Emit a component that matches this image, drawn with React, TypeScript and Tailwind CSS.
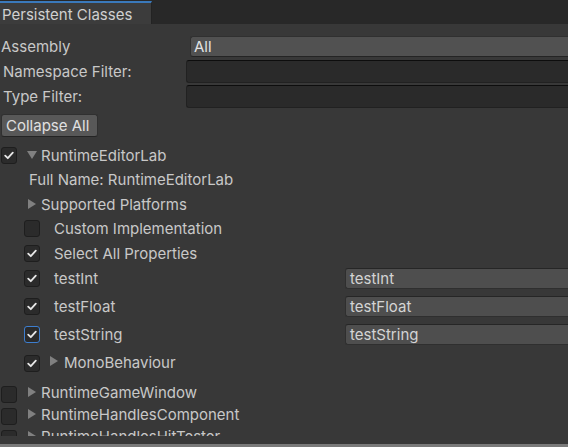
import React from "react";

const font = { fontFamily: "Inter, 'Noto Sans', sans-serif" };

function Check({ checked, focused }: { checked?: boolean; focused?: boolean }) {
  return (
    <div
      className={`w-[16px] h-[17px] shrink-0 rounded-[3px] border bg-[#2b2b2b] flex items-center justify-center ${
        focused ? "border-[#3d7ecf]" : "border-[#1e1e1e]"
      }`}
    >
      {checked && (
        <svg width="10" height="9" viewBox="0 0 10 9">
          <path d="M1.2 4.6 L3.8 7.2 L8.8 1.6" fill="none" stroke="#e6e6e6" strokeWidth="1.8" strokeLinecap="round" strokeLinejoin="round" />
        </svg>
      )}
    </div>
  );
}

function Arrow({ open }: { open?: boolean }) {
  return open ? (
    <svg width="10" height="8" viewBox="0 0 10 8" className="shrink-0">
      <path d="M0 0 L10 0 L5 8 Z" fill="#808080" />
    </svg>
  ) : (
    <svg width="8" height="10" viewBox="0 0 8 10" className="shrink-0">
      <path d="M0 0 L8 5 L0 10 Z" fill="#808080" />
    </svg>
  );
}

function Field({ text }: { text: string }) {
  return (
    <div className="ml-auto w-[223px] h-[21px] shrink-0 rounded-l-[3px] bg-[#4e4e4e] border border-r-0 border-[#2f2f2f] border-t-[#262626] pl-[4px] flex items-center text-[#d4d4d4]">
      {text}
    </div>
  );
}

export default function App() {
  return (
    <div style={font} className="w-[568px] h-[447px] overflow-hidden flex flex-col bg-[#383838] text-[15px] text-[#c8c8c8] leading-none">
      {/* tab strip */}
      <div className="h-[24px] shrink-0 bg-[#282828] flex items-end">
        <div className="w-[152px] h-[23px] bg-[#3c3c3c] border-t-2 border-[#3a79bb] border-r border-r-[#232323] flex items-center pl-[2px] pt-[2px] text-[#d0d0d0]">
          Persistent Classes
        </div>
      </div>

      {/* filters */}
      <div className="shrink-0 flex flex-col pt-[12px]">
        <div className="h-[21px] flex items-center">
          <span className="w-[190px] pl-[1px]">Assembly</span>
          <div className="flex-1 h-full rounded-l-[3px] bg-[#515151] border border-r-0 border-[#303030] border-b-[#242424] pl-[3px] flex items-center text-[#e2e2e2]">
            All
          </div>
        </div>
        <div className="h-[23px] mt-[3px] flex items-center">
          <span className="w-[186px] pl-[3px]">Namespace Filter:</span>
          <div className="flex-1 h-full rounded-l-[3px] bg-[#2a2a2a] border border-r-0 border-[#212121] border-t-[#0d0d0d]" />
        </div>
        <div className="h-[23px] mt-[2px] flex items-center">
          <span className="w-[186px] pl-[3px]">Type Filter:</span>
          <div className="flex-1 h-full rounded-l-[3px] bg-[#2a2a2a] border border-r-0 border-[#212121] border-t-[#0d0d0d]" />
        </div>
        <div className="h-[23px] mt-[6px] ml-[1px] w-[97px] rounded-[3px] bg-[#585858] border border-[#303030] border-b-[#242424] flex items-center pl-[4px] text-[#e0e0e0]">
          Collapse All
        </div>
      </div>

      {/* tree */}
      <div className="flex-1 min-h-0 overflow-hidden flex flex-col pt-[6px]">
        <div className="h-[24px] shrink-0 flex items-center pl-[1px]">
          <Check checked />
          <div className="ml-[10px] mr-[4px]"><Arrow open /></div>
          <span>RuntimeEditorLab</span>
        </div>
        <div className="h-[25px] shrink-0 flex items-center pl-[29px]">Full Name: RuntimeEditorLab</div>
        <div className="h-[24px] shrink-0 flex items-center pl-[28px]">
          <Arrow />
          <span className="ml-[5px]">Supported Platforms</span>
        </div>
        <div className="h-[25px] shrink-0 flex items-center pl-[24px]">
          <Check />
          <span className="ml-[14px]">Custom Implementation</span>
        </div>
        <div className="h-[25px] shrink-0 flex items-center pl-[24px]">
          <Check checked />
          <span className="ml-[14px]">Select All Properties</span>
        </div>
        <div className="h-[25px] shrink-0 flex items-center pl-[24px]">
          <Check checked />
          <span className="ml-[14px]">testInt</span>
          <Field text="testInt" />
        </div>
        <div className="h-[24px] mt-[3px] shrink-0 flex items-center pl-[24px]">
          <Check checked />
          <span className="ml-[14px]">testFloat</span>
          <Field text="testFloat" />
        </div>
        <div className="h-[24px] mt-[4px] shrink-0 flex items-center pl-[24px]">
          <Check checked focused />
          <span className="ml-[14px]">testString</span>
          <Field text="testString" />
        </div>
        <div className="h-[24px] mt-[4px] shrink-0 flex items-center pl-[24px]">
          <div className="mt-[3px]"><Check checked /></div>
          <div className="ml-[10px] -mt-[2px]"><Arrow /></div>
          <span className="ml-[6px]">MonoBehaviour</span>
        </div>
        {["RuntimeGameWindow", "RuntimeHandlesComponent", "RuntimeHandlesHitTester"].map((name, i) => (
          <div key={name} className={`h-[22px] shrink-0 flex items-center pl-[1px] ${i === 0 ? "mt-[8px]" : ""}`}>
            <div className="mt-[3px]"><Check /></div>
            <div className="ml-[11px] -mt-[2px]"><Arrow /></div>
            <span className="ml-[5px] -mt-[2px]">{name}</span>
          </div>
        ))}
      </div>
      <div className="h-[8px] shrink-0" />
      <div className="h-[3px] shrink-0 bg-[#7a7a7a]" />
    </div>
  );
}
